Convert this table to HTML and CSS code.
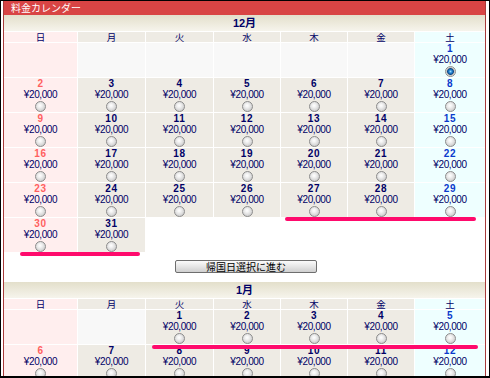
FILE: index.html
```html
<!DOCTYPE html>
<html lang="ja">
<head>
<meta charset="utf-8">
<title>料金カレンダー</title>
<link rel="stylesheet" href="styles.css">
</head>
<body>
<div class="frame">
  <div class="panel">
    <div class="panel-head">料金カレンダー</div>

    <section class="month">
      <div class="month-title">12月</div>
      <div class="cal">
        <div class="dow sun">日</div><div class="dow">月</div><div class="dow">火</div><div class="dow">水</div><div class="dow">木</div><div class="dow">金</div><div class="dow sat">土</div>

        <div class="day sun empty"></div><div class="day empty"></div><div class="day empty"></div><div class="day empty"></div><div class="day empty"></div><div class="day empty"></div>
        <div class="day sat"><b class="num">1</b><span class="price">¥20,000</span><i class="radio on"></i></div>

        <div class="day sun"><b class="num">2</b><span class="price">¥20,000</span><i class="radio"></i></div>
        <div class="day"><b class="num">3</b><span class="price">¥20,000</span><i class="radio"></i></div>
        <div class="day"><b class="num">4</b><span class="price">¥20,000</span><i class="radio"></i></div>
        <div class="day"><b class="num">5</b><span class="price">¥20,000</span><i class="radio"></i></div>
        <div class="day"><b class="num">6</b><span class="price">¥20,000</span><i class="radio"></i></div>
        <div class="day"><b class="num">7</b><span class="price">¥20,000</span><i class="radio"></i></div>
        <div class="day sat"><b class="num">8</b><span class="price">¥20,000</span><i class="radio"></i></div>

        <div class="day sun"><b class="num">9</b><span class="price">¥20,000</span><i class="radio"></i></div>
        <div class="day"><b class="num">10</b><span class="price">¥20,000</span><i class="radio"></i></div>
        <div class="day"><b class="num">11</b><span class="price">¥20,000</span><i class="radio"></i></div>
        <div class="day"><b class="num">12</b><span class="price">¥20,000</span><i class="radio"></i></div>
        <div class="day"><b class="num">13</b><span class="price">¥20,000</span><i class="radio"></i></div>
        <div class="day"><b class="num">14</b><span class="price">¥20,000</span><i class="radio"></i></div>
        <div class="day sat"><b class="num">15</b><span class="price">¥20,000</span><i class="radio"></i></div>

        <div class="day sun"><b class="num">16</b><span class="price">¥20,000</span><i class="radio"></i></div>
        <div class="day"><b class="num">17</b><span class="price">¥20,000</span><i class="radio"></i></div>
        <div class="day"><b class="num">18</b><span class="price">¥20,000</span><i class="radio"></i></div>
        <div class="day"><b class="num">19</b><span class="price">¥20,000</span><i class="radio"></i></div>
        <div class="day"><b class="num">20</b><span class="price">¥20,000</span><i class="radio"></i></div>
        <div class="day"><b class="num">21</b><span class="price">¥20,000</span><i class="radio"></i></div>
        <div class="day sat"><b class="num">22</b><span class="price">¥20,000</span><i class="radio"></i></div>

        <div class="day sun"><b class="num">23</b><span class="price">¥20,000</span><i class="radio"></i></div>
        <div class="day"><b class="num">24</b><span class="price">¥20,000</span><i class="radio"></i></div>
        <div class="day"><b class="num">25</b><span class="price">¥20,000</span><i class="radio"></i></div>
        <div class="day"><b class="num">26</b><span class="price">¥20,000</span><i class="radio"></i></div>
        <div class="day"><b class="num">27</b><span class="price">¥20,000</span><i class="radio"></i></div>
        <div class="day"><b class="num">28</b><span class="price">¥20,000</span><i class="radio"></i></div>
        <div class="day sat"><b class="num">29</b><span class="price">¥20,000</span><i class="radio"></i></div>

        <div class="day sun"><b class="num">30</b><span class="price">¥20,000</span><i class="radio"></i></div>
        <div class="day"><b class="num">31</b><span class="price">¥20,000</span><i class="radio"></i></div>
      </div>
    </section>

    <div class="actions"><button class="next" type="button">帰国日選択に進む</button></div>

    <section class="month">
      <div class="month-title">1月</div>
      <div class="cal">
        <div class="dow sun">日</div><div class="dow">月</div><div class="dow">火</div><div class="dow">水</div><div class="dow">木</div><div class="dow">金</div><div class="dow sat">土</div>

        <div class="day sun empty"></div><div class="day empty"></div>
        <div class="day"><b class="num">1</b><span class="price">¥20,000</span><i class="radio"></i></div>
        <div class="day"><b class="num">2</b><span class="price">¥20,000</span><i class="radio"></i></div>
        <div class="day"><b class="num">3</b><span class="price">¥20,000</span><i class="radio"></i></div>
        <div class="day"><b class="num">4</b><span class="price">¥20,000</span><i class="radio"></i></div>
        <div class="day sat"><b class="num">5</b><span class="price">¥20,000</span><i class="radio"></i></div>

        <div class="day sun"><b class="num">6</b><span class="price">¥20,000</span><i class="radio"></i></div>
        <div class="day"><b class="num">7</b><span class="price">¥20,000</span><i class="radio"></i></div>
        <div class="day"><b class="num">8</b><span class="price">¥20,000</span><i class="radio"></i></div>
        <div class="day"><b class="num">9</b><span class="price">¥20,000</span><i class="radio"></i></div>
        <div class="day"><b class="num">10</b><span class="price">¥20,000</span><i class="radio"></i></div>
        <div class="day"><b class="num">11</b><span class="price">¥20,000</span><i class="radio"></i></div>
        <div class="day sat"><b class="num">12</b><span class="price">¥20,000</span><i class="radio"></i></div>
      </div>
    </section>
  </div>

  <span class="mark mark-1"></span>
  <span class="mark mark-2"></span>
  <span class="mark mark-3"></span>
</div>
</body>
</html>
```

FILE: styles.css
```css
html, body {
  margin: 0;
  padding: 0;
  background: #fff;
}

body {
  font-family: "Liberation Sans", "Noto Sans CJK JP", sans-serif;
  color: #000066;
}

.frame {
  position: relative;
  width: 490px;
  height: 378px;
  box-sizing: border-box;
  border: 1px solid #000;
  border-bottom-width: 2px;
  padding: 0 3px 0 2px;
  background: #fff;
  overflow: hidden;
}

.panel {
  height: 100%;
  border-left: 1px solid #a83a3a;
  border-right: 1px solid #a83a3a;
  background: #fff;
}

.panel-head {
  height: 14px;
  line-height: 14px;
  padding-left: 7px;
  background: #d84444;
  color: #fff;
  font-family: "Noto Sans CJK JP", sans-serif;
  font-size: 10px;
}

.month-title {
  height: 16px;
  line-height: 16px;
  margin-bottom: 1px;
  text-align: center;
  font-weight: bold;
  font-size: 11px;
  color: #000066;
  background: linear-gradient(#e3dfcb, #f6f4ec);
}

.cal {
  display: grid;
  grid-template-columns: 73px 67px 67px 66px 66px 66px 70px;
  grid-template-rows: 10px;
  grid-auto-rows: 34px;
  gap: 1px;
}

.dow {
  font-family: "Noto Sans CJK JP", sans-serif;
  font-size: 9.5px;
  line-height: 10px;
  text-align: center;
  background: #eeebe4;
  color: #000066;
}

.day {
  display: flex;
  flex-direction: column;
  align-items: center;
  background: #eeebe4;
}

.sun { background: #ffeeee; }
.sat { background: #eeffff; }
.day.empty { background: #f8f8f8; }
.day.sun.empty { background: #ffeeee; }

.num {
  display: block;
  height: 11px;
  line-height: 12px;
  font-size: 10px;
  font-weight: bold;
  letter-spacing: 0.6px;
  color: #000066;
}

.sun .num { color: #ff5f5f; }
.sat .num { color: #0a3acc; }

.price {
  display: block;
  height: 11px;
  line-height: 12px;
  font-size: 10px;
  letter-spacing: -0.4px;
  color: #000066;
}

.radio {
  display: block;
  width: 11px;
  height: 11px;
  margin-top: 1px;
  box-sizing: border-box;
  border: 1px solid #8c8c8c;
  border-radius: 50%;
  background: radial-gradient(circle at 45% 40%, #ffffff 0, #f2f2f2 25%, #d2d2d2 70%, #b8b8b8 100%);
}

.radio.on {
  background: radial-gradient(circle at 50% 50%, #9fdcff 0, #2a8ad6 1.5px, #0c4a8c 3px, #a8a8a8 3.6px, #eeeeee 4.5px);
}

.actions {
  display: flex;
  justify-content: center;
  padding: 8px 0 9px 3px;
}

.next {
  width: 142px;
  height: 13px;
  padding: 0;
  margin: 0;
  border: 1px solid #6e6e6e;
  border-radius: 2px;
  background: linear-gradient(#fbfbfb, #e6e6e6 50%, #cfcfcf);
  font-family: "Noto Sans CJK JP", sans-serif;
  font-size: 10px;
  line-height: 11px;
  color: #000;
}

.mark {
  position: absolute;
  height: 4px;
  border-radius: 2px;
  background: #ff0a6c;
}

.mark-1 { left: 284px; top: 216px; width: 191px; }
.mark-2 { left: 19px;  top: 251px; width: 120px; }
.mark-3 { left: 151px; top: 344px; width: 326px; }
```
